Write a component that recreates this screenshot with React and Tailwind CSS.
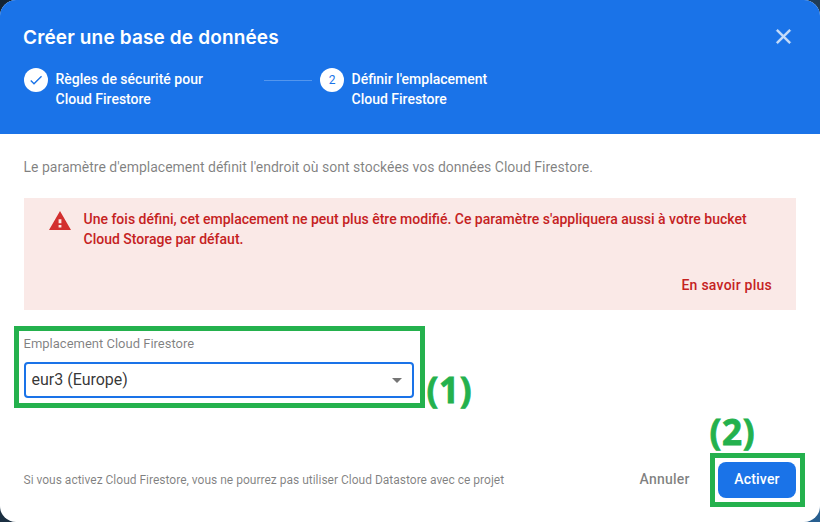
import React from "react";

function Step({ badge, lines, className }) {
  return (
    <div className={`flex items-start ${className}`}>
      <span className="flex h-6 w-6 shrink-0 items-center justify-center rounded-full bg-white text-[12px] font-normal text-[#1a73e8]">
        {badge}
      </span>
      <p className="mt-px ml-[7.5px] whitespace-nowrap text-[14px] leading-5 font-medium text-white">
        {lines[0]}
        <br />
        {lines[1]}
      </p>
    </div>
  );
}

function Check() {
  return (
    <svg width="16" height="16" viewBox="0 0 24 24" fill="#1a73e8">
      <path d="M9 16.17L4.83 12l-1.42 1.41L9 19 21 7l-1.41-1.41z" />
    </svg>
  );
}

export default function App() {
  return (
    <div className="h-[522px] w-[820px] overflow-hidden bg-[linear-gradient(135deg,#132434_0%,#1d3245_50%,#285f90_100%)] font-['Roboto',sans-serif]">
      <main className="flex h-full flex-col overflow-hidden rounded-2xl bg-white">
        <header className="h-[134px] shrink-0 bg-[#1a73e8] px-6 pt-[22px] text-white">
          <div className="flex h-7 items-center justify-between">
            <h1 className="-ml-px pt-1 whitespace-nowrap font-['Inter',sans-serif] text-[19px] leading-7 font-semibold tracking-[0.15px]">
              Créer une base de données
            </h1>
            <svg width="25" height="25" viewBox="0 0 24 24" className="text-white/75" fill="currentColor" stroke="currentColor" strokeWidth="0.4">
              <path d="M19 6.41L17.59 5 12 10.59 6.41 5 5 6.41 10.59 12 5 17.59 6.41 19 12 13.41 17.59 19 19 17.59 13.41 12z" />
            </svg>
          </div>
          <div className="mt-[18px] flex items-start">
            <Step className="w-60" badge={<Check />} lines={["Règles de sécurité pour", "Cloud Firestore"]} />
            <div className="mt-3 mr-2 h-px w-12 bg-white/25" />
            <Step className="" badge="2" lines={["Définir l'emplacement", "Cloud Firestore"]} />
          </div>
        </header>

        <section className="px-6 pt-[23px]">
          <p className="-ml-[0.5px] text-[14px] leading-5 whitespace-nowrap text-black/50">
            Le paramètre d'emplacement définit l'endroit où sont stockées vos données Cloud Firestore.
          </p>
          <div className="mt-[21px] flex h-28 flex-col justify-between bg-[#fae9e7] pt-[11px] pr-6 pb-[15px] pl-6 font-medium text-[#c5221f]">
            <div className="flex">
              <svg width="24" height="24" viewBox="0 0 24 24" className="-ml-[0.5px] shrink-0" fill="#d32f2f">
                <path d="M1 21h22L12 2 1 21zm12.4-2.6h-2.8v-2.4h2.8v2.4zm0-4.2h-2.8v-4h2.8v4z" />
              </svg>
              <p className="ml-3 text-[14px] leading-5 whitespace-nowrap">
                Une fois défini, cet emplacement ne peut plus être modifié. Ce paramètre s'appliquera aussi à votre bucket
                <br />
                Cloud Storage par défaut.
              </p>
            </div>
            <a className="self-end text-[14px] leading-5 tracking-[0.25px]">En savoir plus</a>
          </div>
        </section>

        <section className="mt-4 ml-[14px] flex h-[82px] items-end">
          <div className="h-[82px] w-[411px] shrink-0 border-5 border-[#24b14d] pt-[5px] pl-[5px]">
            <label className="-ml-[0.5px] block text-[13px] leading-4 whitespace-nowrap text-black/50">
              Emplacement Cloud Firestore
            </label>
            <div className="mt-[10px] flex h-9 w-[390px] items-center justify-between rounded-[4px] border-2 border-[#1a73e8] pr-[10px] pl-[5.5px]">
              <span className="text-[16px] leading-6 text-black/80">eur3 (Europe)</span>
              <span className="border-x-5 border-t-5 border-x-transparent border-t-[#757575]" />
            </div>
          </div>
          <span className="ml-[1.5px] font-['Open_Sans',sans-serif] text-[35px] leading-9 font-bold tracking-[0.7px] text-[#24b14d] [-webkit-text-stroke:0.8px_#24b14d]">
            (1)
          </span>
        </section>

        <footer className="mt-[7px] flex h-[92px] pl-6">
          <p className="mt-[57px] -ml-[0.5px] w-[616px] text-[12px] leading-4 whitespace-nowrap text-black/50">
            Si vous activez Cloud Firestore, vous ne pourrez pas utiliser Cloud Datastore avec ce projet
          </p>
          <button className="mt-[54px] mr-[0.5px] h-5 w-[70px] text-left text-[14px] leading-5 font-medium tracking-[0.25px] text-black/50">
            Annuler
          </button>
          <div className="flex flex-col">
            <span className="-mt-px -ml-[0.5px] h-[39px] font-['Open_Sans',sans-serif] text-[35px] leading-9 font-bold tracking-[0.7px] text-[#24b14d] [-webkit-text-stroke:0.8px_#24b14d]">
              (2)
            </span>
            <div className="h-[54px] w-[95px] border-5 border-[#24b14d] pt-1 pl-[3px]">
              <button className="h-9 w-[78px] rounded-lg bg-[#1a73e8] pb-[2px] text-[14px] leading-5 font-medium tracking-[0.2px] text-white">
                Activer
              </button>
            </div>
          </div>
        </footer>
      </main>
    </div>
  );
}
